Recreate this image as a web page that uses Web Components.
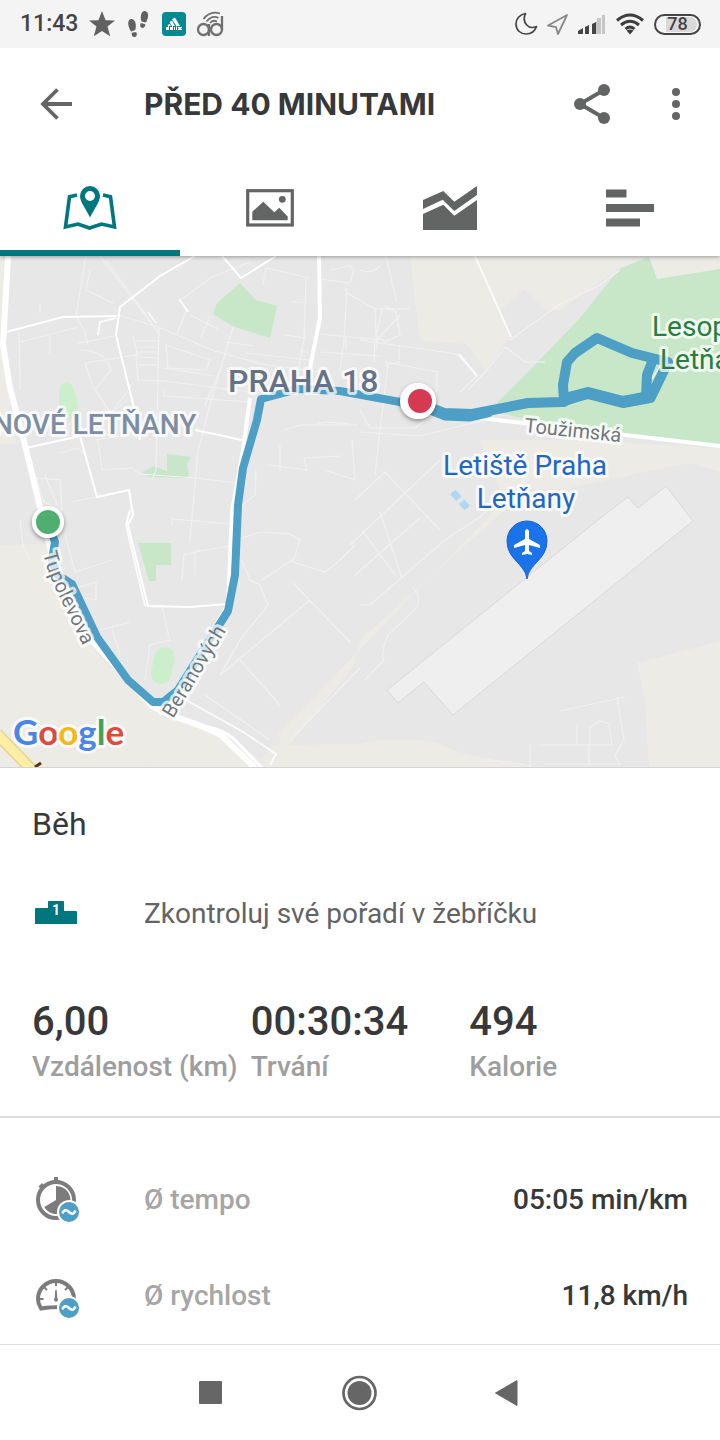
<!DOCTYPE html>
<html lang="cs">
<head>
<meta charset="utf-8">
<meta name="viewport" content="width=device-width, initial-scale=1">
<title>Před 40 minutami</title>
<style>
  html, body { margin: 0; background: #fff; }
  body { font-family: Roboto, "Liberation Sans", sans-serif; color: #37383a; }
</style>
</head>
<body>
<activity-screen></activity-screen>

<template id="activity-screen">
  <style>
    :host { display: flex; flex-direction: column; min-height: 100vh; background: #fff; }
    main { flex: 1; }
    .metrics { padding: 34px 0 0; border-top: 2px solid #dedede; }
  </style>
  <status-bar></status-bar>
  <app-bar>PŘED 40 MINUTAMI</app-bar>
  <tab-strip></tab-strip>
  <main>
    <route-map></route-map>
    <activity-summary></activity-summary>
    <section class="metrics">
      <metric-row>
        <svg slot="icon" width="48" height="48" viewBox="0 0 48 48" aria-hidden="true">
          <circle cx="24" cy="24" r="18" fill="none" stroke="#7c7c7c" stroke-width="4"/>
          <path d="M22 1h4v4h-4zM6.500 10.500l3.500-3.500 2.500 2.500-3.500 3.500z" fill="#7c7c7c"/>
          <path d="M24 24V10A14 14 0 1 1 12.300 31z" fill="#7c7c7c"/>
          <circle cx="37" cy="36" r="12" fill="#fff"/><circle cx="37" cy="36" r="10" fill="#4d9fc5"/>
          <path d="M30.500 37.500c1-4 4-4 6.500-1.500s5 2.500 6.500-1.500" fill="none" stroke="#fff" stroke-width="2.500"/>
        </svg>
        <span slot="label">Ø tempo</span>
        <span slot="value">05:05 min/km</span>
      </metric-row>
      <metric-row>
        <svg slot="icon" width="48" height="48" viewBox="0 0 48 48" aria-hidden="true">
          <path d="M42 27A18 18 0 0 0 6 27Q6 32 9 36.500Q18 35 30 35" fill="none" stroke="#7c7c7c" stroke-width="4"/>
          <path d="M24 10v4M12.500 15.500l2.500 2.500M35.500 15.500l-2.500 2.500M8 27h3.500M37 27h3" stroke="#7c7c7c" stroke-width="2"/>
          <path d="M23.300 18h1.400l.6 8a2 2 0 1 1-2.600 0z" fill="#7c7c7c"/>
          <circle cx="37" cy="36" r="12" fill="#fff"/><circle cx="37" cy="36" r="10" fill="#4d9fc5"/>
          <path d="M30.500 37.500c1-4 4-4 6.500-1.500s5 2.500 6.500-1.500" fill="none" stroke="#fff" stroke-width="2.500"/>
        </svg>
        <span slot="label">Ø rychlost</span>
        <span slot="value">11,8 km/h</span>
      </metric-row>
    </section>
  </main>
  <nav-bar></nav-bar>
</template>

<template id="status-bar">
  <style>
    :host { display: block; background: #f4f4f4; }
    .bar { display: flex; align-items: center; justify-content: space-between; height: 48px; padding: 0 19px 0 20px; }
    .left, .right { display: flex; align-items: center; }
    .left { gap: 10px; } .right { gap: 8px; }
    time { font-size: 23px; line-height: 32px; font-weight: 500; color: #444; }
    svg { display: block; }
    .battery { box-sizing: border-box; width: 47px; height: 21px; border: 2px solid #444; border-radius: 11px;
      display: flex; align-items: center; justify-content: center; font-size: 18px; line-height: 18px; font-weight: 500; color: #444;
      background: linear-gradient(90deg, transparent 24%, #d9d9d9 24%); background-clip: content-box; padding: 1px 2px; }
  </style>
  <div class="bar">
    <div class="left">
      <time>11:43</time>
      <svg width="28" height="28" viewBox="0 0 28 28"><path d="M14 1l3.600 9.200 9.400.3-7.500 6 2.700 9.700L14 21l-8.200 5.200 2.700-9.700-7.500-6 9.400-.3z" fill="#616161"/></svg>
      <svg width="26" height="28" viewBox="0 0 26 28" fill="#616161"><path d="M19 1c-3.200-.3-5.300 4.500-3.500 10.500l4.500 1C22 9 24 2 19 1zM14.800 13l4.600 1.300c-.4 3.300-2 4-3.600 3.500-2-.7-1.900-2.500-1-4.800zM5 9c3.500-.3 6 4 4.300 11L5 21.500C2 17 .7 9.800 5 9zM5.600 22.800l4.600-.9c1.600 4-.4 5-1.900 5.100-1.700.1-2.700-1.300-2.700-4.200z"/></svg>
      <svg width="24" height="24" viewBox="0 0 24 24"><rect width="24" height="24" rx="4" fill="#008b92"/><path d="M10 7.500l3-2 5 8.500h-3.500zM7.500 10l2.500-1.500 3 5.500H9.700zM5.500 13l2-1 1.500 2H6zM4 15h2v-1.200h1V18H4zM8 15h2v-1h1v4H8zM12 15h1v3h-1zM14 14.500h1V18h-1zM16 15h4v1h-2l2 1v1h-4v-1h1l-1-1z" fill="#fff"/></svg>
      <svg width="28" height="28" viewBox="0 0 28 28" fill="none" stroke="#707070" stroke-width="2.300"><circle cx="7.500" cy="19.500" r="5.500"/><path d="M13 14v12M26 6v14"/><circle cx="20.500" cy="19.500" r="5.500"/><path d="M7.500 9C12 3 18 1.500 24 3.500M10.500 11.500C14 6.500 19 6 22.500 8M14 13c2-2.500 5-2.500 7-1.500" stroke-width="1.800"/></svg>
    </div>
    <div class="right">
      <svg width="24" height="24" viewBox="0 0 24 24"><path d="M11.500 1.500C5.500 2.500 2 7 2 12c0 6 4.500 10 10 10 5 0 9-3 10.500-7.500-8 3.500-15-4-11-13z" fill="none" stroke="#444" stroke-width="1.700" stroke-linejoin="round"/></svg>
      <svg width="24" height="24" viewBox="0 0 24 24"><path d="M21 3L2 13.500l8 1.700 2 6.800z" fill="none" stroke="#888" stroke-width="1.800" stroke-linejoin="round"/></svg>
      <svg width="30" height="24" viewBox="0 0 30 24"><path d="M0 19l5-3v6H0zM7 15l4-2v9H7zM14 12l4-2v12h-4z" fill="#444"/><path d="M18 10l1-1v13h-1zM19 6h4v16h-4zM24 3h3v19h-3z" fill="#c6c6c6"/></svg>
      <svg width="30" height="24" viewBox="0 0 30 24" fill="none" stroke="#3d3d3d" stroke-width="3"><path d="M1 8.500Q14 -2.500 27 8.500M5 13Q14 5.500 23 13M9.500 17Q14 13 18.500 17"/><path d="M10.500 18.500q3.500-2 7 0L14 22.500z" fill="#3d3d3d" stroke="none"/></svg>
      <span class="battery">78</span>
    </div>
  </div>
</template>

<template id="app-bar">
  <style>
    :host { display: block; position: relative; z-index: 2; background: #fff; }
    header { display: flex; align-items: center; height: 112px; padding: 0 20px 0 32px; }
    button { border: 0; padding: 0; width: 48px; height: 48px; background: none; color: #636564; cursor: pointer; }
    svg { display: block; }
    h1 { flex: 1; margin: 0 0 0 64px; font: 700 30px/40px Inter, Roboto, sans-serif; white-space: nowrap; color: #37383a; }
    .more { margin-left: 36px; }
  </style>
  <header>
    <button aria-label="Zpět"><svg width="48" height="48" viewBox="0 0 48 48" fill="none" stroke="currentColor" stroke-width="3.800"><path d="M25.500 9.500L11 24l14.500 14.500M11 24h29"/></svg></button>
    <h1><slot></slot></h1>
    <button aria-label="Sdílet"><svg width="48" height="48" viewBox="0 0 48 48" fill="currentColor"><path d="M36 10L12 24l24 14" fill="none" stroke="currentColor" stroke-width="4"/><circle cx="12" cy="24" r="6"/><circle cx="36" cy="10" r="6"/><circle cx="36" cy="38" r="6"/></svg></button>
    <button class="more" aria-label="Další možnosti"><svg width="48" height="48" viewBox="0 0 48 48" fill="currentColor"><circle cx="24" cy="12" r="4"/><circle cx="24" cy="24" r="4"/><circle cx="24" cy="36" r="4"/></svg></button>
  </header>
</template>

<template id="tab-strip">
  <style>
    :host { display: block; position: relative; z-index: 1; background: #fff; box-shadow: 0 1px 4px rgba(0,0,0,.35); }
    div { display: grid; grid-template-columns: repeat(4, 1fr); height: 96px; }
    button { display: flex; align-items: center; justify-content: center; border: 0; padding: 6px 0 0; background: none; color: #636564; border-bottom: 6px solid transparent; cursor: pointer; }
    button[aria-selected="true"] { color: #00767e; border-bottom-color: #00767e; }
  </style>
  <div role="tablist">
    <button role="tab" aria-selected="true" aria-label="Mapa"><svg width="60" height="60" viewBox="0 0 60 60"><path d="M17 17L9.500 18.700 5.500 49l12.500-3 11.500 4 12-4 13 3-4-30.300L43 17" fill="none" stroke="currentColor" stroke-width="3.600"/><path fill-rule="evenodd" d="M30 8a10 10 0 0 1 10 10c0 6-6 13-10 21.500C26 31 20 24 20 18A10 10 0 0 1 30 8zm0 5a5 5 0 1 0 0 10 5 5 0 0 0 0-10z" fill="currentColor"/></svg></button>
    <button role="tab" aria-selected="false" aria-label="Fotky"><svg width="60" height="60" viewBox="0 0 60 60"><rect x="7.700" y="12.700" width="44.600" height="34.300" fill="none" stroke="currentColor" stroke-width="3.200"/><path d="M12.300 33.700l11-10 11 10.600 5-4.600 8.400 8.800v3.800H12.300z" fill="currentColor"/><circle cx="42.300" cy="21.300" r="3.400" fill="currentColor"/></svg></button>
    <button role="tab" aria-selected="false" aria-label="Grafy"><svg width="60" height="60" viewBox="0 0 60 60" fill="currentColor"><path d="M3 22l20.300-9 11 10.700L57 8v9L34.300 33 22.700 21.700 3 31zM3 36l20.300-9.300 11 11L57 22v30H3z"/></svg></button>
    <button role="tab" aria-selected="false" aria-label="Kola"><svg width="60" height="60" viewBox="0 0 60 60" fill="currentColor"><path d="M6 11.500h20.500v8H6zM6 26h48v8H6zM6 40.500h34v8H6z"/></svg></button>
  </div>
</template>

<template id="route-map">
  <style>
    :host { display: block; background: #e7e7e7; border-bottom: 1px solid #d4d4d4; }
    svg { display: block; width: 100%; height: auto; }
    text { font-family: Roboto, "Liberation Sans", sans-serif; paint-order: stroke; stroke: #fff; stroke-opacity: .72; stroke-width: 6px; stroke-linejoin: round; }
    .district { font-size: 32px; font-weight: 500; fill: #667286; }
    .quarter { font-size: 28px; font-weight: 500; fill: #7e8da3; }
    .place { font-size: 28px; fill: #2167c4; }
    .park { font-size: 28px; fill: #25803f; }
    .street { font-size: 20px; fill: #70777c; }
    .logo { font-family: Lato, sans-serif; font-size: 35px; font-weight: 700; }
    .minor { fill: none; stroke: #f1f1f1; stroke-width: 1.200; }
    .mid { fill: none; stroke: #fff; stroke-width: 2; }
    .major { fill: none; stroke: #fff; stroke-linejoin: round; }
    .route { fill: none; stroke: #4d9fc5; stroke-linejoin: round; stroke-linecap: round; }
  </style>
  <svg viewBox="0 256 720 511" role="img" aria-label="Mapa trasy">
    <defs>
      <path id="tupolevova" d="M43 553Q48 575 59 596L90 660"/>
      <path id="beranovych" d="M173 719L232 621"/>
      <filter id="drop" x="-50%" y="-50%" width="200%" height="200%"><feDropShadow dx="0" dy="2" stdDeviation="2" flood-opacity=".4"/></filter>
    </defs>
    <rect y="256" width="720" height="512" fill="#e7e7e7"/>
    <g fill="#ecebe6">
      <path d="M0 256H4L2 350 16 444H0z"/>
      <path d="M0 545L47 544 56 590 98 655 160 716 148 768H0z"/>
      <path d="M410 256H648L620 268 560 310 545 310 524 289 500 311 510 336 486 370 466 344 420 340z"/>
      <path d="M649 256H720V271L657 279z"/>
      <path d="M480 440L565 440 720 448V472L690 463 640 473 565 489 500 489z"/>
      <path d="M637 663L720 641V768H649L645 700z"/>
      <path d="M158 716L200 728 280 768H148zM272 745L360 744C380 738 410 740 425 741C445 742 445 750 475 756L535 768H255z"/>
      <path d="M278 734L495 510 505 510 360 640 352 668 284 752z"/>
    </g>
    <g fill="#c7e7c8">
      <path d="M490 410L530 370 580 318 619 269 649 257 657 279 720 269V445L560 428z"/>
      <path d="M240 283L256 300 277 306 270 338 232 326 213 314 217 303z"/>
      <path d="M167 454L191 457 187 464 189 476 185 478 150 477 142 473 154 466 167 471z"/>
      <path d="M138 543H171V565H156V581H149z"/>
    </g>
    <path d="M59 391Q60 382 68 382 75 384 78 408L71 419H65L59 403z" fill="#cbeecb"/>
    <rect x="153" y="647" width="20" height="37" rx="10" transform="rotate(12 163 665)" fill="#cbeecb"/>
    <path d="M603 516L628 497 638 508 666 486 693 521 453 715 424 682 398 703 387 690z" fill="#efefef" stroke="#d9d9d9"/>

    <g class="minor">
      <path d="M86 256L76 316 84 330 88 345M100 256L160 335M106 260L152 323M90 270L86 290 113 303M20 342L78 327M19 333L20 390M40 313V304M50 335V354"/>
      <path d="M118 315L158 327 215 351 261 364 320 372M159 326L156 470 152 480M180 300L212 277 250 262M180 300L187 309 177 334M190 315L218 329M201 338L210 316M233 327L210 405 198 450 190 540"/>
      <path d="M78 343L90 341 114 336M80 350Q105 350 111 370L95 390M85 363L136 355 138 380 164 381 250 392M85 363L92 385 110 412 122 405M112 412L134 382M133 336L138 357 158 358M135 341H158M137 347H158M137 352H158M138 365H158"/>
      <path d="M166 345L210 360 206 370 168 368zM222 366L205 405M164 368L215 376M163 390L164 396 250 402M225 342L254 346M245 353L310 360M266 268L263 285M266 268L310 278M306 278L304 340 298 372M291 302H307M285 335L305 338"/>
      <path d="M320 279L350 283 354 270 350 266 330 270M345 288L347 293 375 309 410 309M347 288L344 340 340 372M320 334L380 340M346 338V350M320 352L380 356M300 350L308 353M375 310L377 350M385 306L396 312 400 335 385 342 376 335 382 310M400 315L377 340"/>
      <path d="M360 340L457 354 477 376 460 392M375 340L374 362M399 345V360M385 362L437 372V390L430 398M400 362L385 365M360 410L370 428H415L435 412M388 365L380 430 375 475M360 432L420 436 485 420"/>
      <path d="M386 256L397 303M510 340L560 304 600 285 620 270M505 347L525 362H545M505 347L487 370 468 390M360 270Q370 275 380 266M285 430L300 425H358M280 445V470M268 465L307 470 304 458 340 456M317 425Q320 420 350 424M256 470L255 495 243 505M325 470L355 480 352 440"/>
      <path d="M36 478L44 502 62 510 60 480 36 478M45 475L57 505M72 502L120 492M60 453L78 448 86 455M98 440L102 470 133 468M95 440L130 435M134 470L140 474 196 478 236 483"/>
      <path d="M20 520L23 545 30 560M65 535L75 572 112 560M70 590L96 582V600L85 598M100 630L130 622M112 630L120 655M162 604L166 625 170 640 150 645 145 680M172 519L230 524M172 517V526M182 580L184 555 200 550M195 575V552L230 546"/>
      <path d="M242 538L260 532 290 534 300 540 293 562 325 572 340 560 355 545M242 560L250 580 260 585 268 605 240 640 220 675M262 580L295 558M293 583L350 642M310 600L220 675M240 660L280 705M350 545L440 460M355 575L420 518M362 530L395 575M380 512L402 578"/>
      <path d="M355 500L385 472 440 530M360 605L370 605 445 540 480 517 525 480M413 588Q425 600 412 612L388 635Q380 655 384 660L365 680M290 740L360 668M205 695L270 740M560 711L625 697M617 697L624 740 615 755 620 766M590 745V727L600 721 609 724 612 745H540M577 745V725M530 745V766M545 764H620M589 745V764M485 760Q520 762 535 768"/>
    </g>
    <g class="mid">
      <path d="M6 332L63 317 117 316M195 256L160 276 120 307 116 335 134 408 140 440M222 256L241 278 276 256M26 448L80 436 97 497 129 490 133 515 128 525 148 606 190 607 228 604M126 525L130 510M195 430L242 440" stroke-width="2"/>
      <path d="M475 256L511 337M459 354L477 376M179 299L188 312M148 312L156 323M98 335L100 322 116 318M126 525L145 606M186 700L245 733 276 754 270 765" stroke="#fafafa"/>
    </g>
    <g class="major">
      <path d="M8 256L3 345 10 388 25 445 42 515 52 555 84 632 152 706C175 720 200 722 222 736L255 768" stroke-width="6"/>
      <path d="M319 256L320 318 310 368M250 398L243 450 232 512 228 604 180 690 160 715" stroke-width="4"/>
      <path d="M160 712C190 728 215 722 235 740L262 768" stroke-width="3"/>
      <path d="M480 418L720 446" stroke-width="4"/>
    </g>
    <path d="M-3 734L34 772" stroke="#e8d48b" stroke-width="12"/><path d="M-3 734L34 772" stroke="#fdeea5" stroke-width="9"/>
    <path d="M35 767l6-4" stroke="#5b321b" stroke-width="3"/>
    <path d="M453 492l14 16" stroke="#add7f5" stroke-width="7" stroke-dasharray="9 4"/>

    <g class="route">
      <path d="M48 522L55 542 52 560 58 575 72 584 97 637 128 680 153 702 163 702 178 690 228 611 235 575 238 505 243 468 257 420 261 399 298 389 340 391 400 402" stroke-width="8"/>
      <path d="M402 402L421 404 444 413 472 414 528 403 562 402 588 393 623 402 648 396" stroke-width="10"/>
      <path d="M425 407L445 415 470 416 488 412" stroke-width="11"/>
      <path d="M565 399L588 393 623 402 650 397" stroke-width="12"/>
      <path d="M564 402L563 385 567 362 575 353 597 338 632 353 668 362 652 395M652 362L647 375 646 397" stroke-width="10"/>
    </g>
    <path d="M660 366L652 379" stroke="#fff" stroke-width="1"/>

    <text class="district" x="228" y="392">PRAHA 18</text>
    <text class="quarter" x="-7" y="434">NOVÉ LETŇANY</text>
    <text class="place" x="525" y="475" text-anchor="middle">Letiště Praha</text>
    <text class="place" x="526" y="508" text-anchor="middle">Letňany</text>
    <text class="park" x="652" y="336">Lesop</text>
    <text class="park" x="660" y="369">Letňa</text>
    <text class="street" transform="translate(524 432) rotate(6)">Toužimská</text>
    <text class="street"><textPath href="#tupolevova">Tupolevova</textPath></text>
    <text class="street"><textPath href="#beranovych">Beranových</textPath></text>
    <text class="logo" x="13" y="745"><tspan fill="#4a86e8">G</tspan><tspan fill="#e04a3c">o</tspan><tspan fill="#f3b91b">o</tspan><tspan fill="#4a86e8">g</tspan><tspan fill="#3fa457">l</tspan><tspan fill="#e04a3c">e</tspan></text>

    <path d="M527 579C525 563 507 560 507 541a20 20 0 0 1 40 0C547 560 529 563 527 579z" fill="#1a73e8" stroke="#1b63c6"/>
    <path d="M525 531q2-4 4 0v8l11 6v3l-11-3v6l3 2v2l-5-1-5 1v-2l3-2v-6l-11 3v-3l11-6z" fill="#fff"/>
    <circle cx="48" cy="522" r="14" fill="#4fae70" stroke="#fff" stroke-width="4" filter="url(#drop)"/>
    <circle cx="418" cy="401" r="18" fill="#fff" filter="url(#drop)"/><circle cx="420" cy="401" r="12" fill="#d63a53"/>
  </svg>
</template>

<template id="activity-summary">
  <style>
    :host { display: block; }
    section { padding: 32px 32px 28px; }
    h2 { margin: 0 0 18px; font-size: 32px; line-height: 48px; font-weight: 400; color: #37383a; }
    a { display: flex; align-items: center; gap: 64px; height: 96px; font-size: 28px; line-height: 36px; color: #636363; text-decoration: none; }
    .stats { display: grid; grid-template-columns: repeat(3, 1fr); margin-top: 36px; }
    .rank { font: 700 14px/14px Roboto, sans-serif; fill: #fff; }
  </style>
  <section>
    <h2>Běh</h2>
    <a href="#leaderboard">
      <svg width="48" height="48" viewBox="0 0 48 48"><path d="M3 34V19q0-1 1-1h12v-6q0-1 1-1h14q1 0 1 1v9h12q1 0 1 1v12z" fill="#00767e"/><text class="rank" x="24" y="25" text-anchor="middle">1</text></svg>
      <span>Zkontroluj své pořadí v žebříčku</span>
    </a>
    <div class="stats">
      <stat-item>6,00<span slot="label">Vzdálenost (km)</span></stat-item>
      <stat-item>00:30:34<span slot="label">Trvání</span></stat-item>
      <stat-item>494<span slot="label">Kalorie</span></stat-item>
    </div>
  </section>
</template>

<template id="stat-item">
  <style>
    :host { display: flex; flex-direction: column; min-width: 0; white-space: nowrap; }
    .value { font-size: 40px; line-height: 48px; font-weight: 500; color: #37383a; }
    .label { font-size: 28px; line-height: 42px; font-weight: 500; color: #9e9e9e; }
  </style>
  <div class="value"><slot></slot></div>
  <div class="label"><slot name="label"></slot></div>
</template>

<template id="metric-row">
  <style>
    :host { display: flex; align-items: center; height: 96px; padding: 0 32px; font-size: 28px; line-height: 36px; font-weight: 500; }
    .label { flex: 1; margin-left: 64px; color: #a6a6a6; }
    .value { color: #37383a; }
  </style>
  <slot name="icon"></slot>
  <div class="label"><slot name="label"></slot></div>
  <div class="value"><slot name="value"></slot></div>
</template>

<template id="nav-bar">
  <style>
    :host { display: block; border-top: 1px solid #e0e0e0; background: #fff; }
    nav { display: flex; align-items: center; justify-content: center; gap: 100px; height: 95px; }
    button { border: 0; padding: 0; width: 48px; height: 48px; background: none; color: #666; cursor: pointer; }
    svg { display: block; }
  </style>
  <nav>
    <button aria-label="Poslední aplikace"><svg width="48" height="48" viewBox="0 0 48 48"><rect x="11" y="12" width="23" height="23" rx="1" fill="currentColor"/></svg></button>
    <button aria-label="Domů"><svg width="48" height="48" viewBox="0 0 48 48"><circle cx="23.500" cy="24" r="16" fill="none" stroke="currentColor" stroke-width="2.700"/><circle cx="23.500" cy="24" r="12" fill="currentColor"/></svg></button>
    <button aria-label="Zpět"><svg width="48" height="48" viewBox="0 0 48 48"><path d="M11.500 24L33 11.500v25z" fill="currentColor" stroke="currentColor" stroke-linejoin="round"/></svg></button>
  </nav>
</template>

<script>
  class TemplateElement extends HTMLElement {
    constructor() {
      super();
      const template = document.getElementById(this.localName);
      this.attachShadow({ mode: "open" }).appendChild(template.content.cloneNode(true));
    }
  }

  class StatusBar extends TemplateElement {}
  class AppBar extends TemplateElement {}
  class RouteMap extends TemplateElement {}
  class StatItem extends TemplateElement {}
  class ActivitySummary extends TemplateElement {}
  class MetricRow extends TemplateElement {}
  class NavBar extends TemplateElement {}
  class ActivityScreen extends TemplateElement {}

  class TabStrip extends TemplateElement {
    connectedCallback() {
      const tabs = this.shadowRoot.querySelectorAll("button");
      tabs.forEach(tab => tab.addEventListener("click", () => {
        tabs.forEach(t => t.setAttribute("aria-selected", String(t === tab)));
      }));
    }
  }

  customElements.define("status-bar", StatusBar);
  customElements.define("app-bar", AppBar);
  customElements.define("tab-strip", TabStrip);
  customElements.define("route-map", RouteMap);
  customElements.define("stat-item", StatItem);
  customElements.define("activity-summary", ActivitySummary);
  customElements.define("metric-row", MetricRow);
  customElements.define("nav-bar", NavBar);
  customElements.define("activity-screen", ActivityScreen);
</script>
</body>
</html>
